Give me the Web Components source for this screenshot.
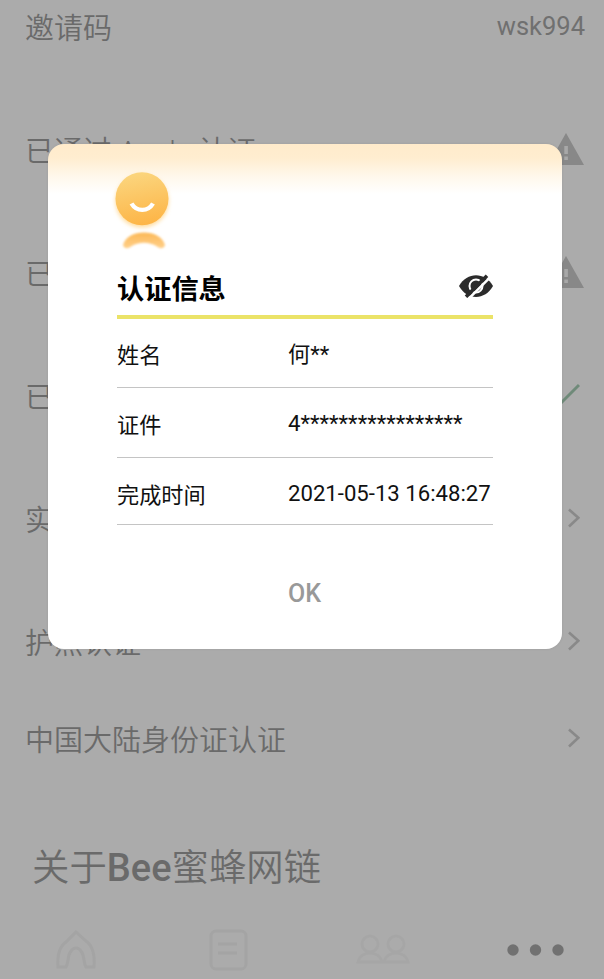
<!DOCTYPE html>
<html lang="zh-CN">
<head>
<meta charset="utf-8">
<meta name="viewport" content="width=device-width, initial-scale=1">
<title>认证信息</title>
<style>
html, body {
  margin: 0;
  height: 979px;
  overflow: hidden;
}
body {
  background: #ababab;
  font-family: Roboto, "Noto Sans CJK SC", sans-serif;
}
</style>
</head>
<body>
<bee-app></bee-app>

<script>
const define = (name, html) => {
    const template = document.createElement("template");
    template.innerHTML = html;
    customElements.define(name, class extends HTMLElement {
        constructor() {
            super();
            this.attachShadow({ mode: "open" });
            this.shadowRoot.appendChild(template.content.cloneNode(true));
        }
    });
};

define("setting-row", `\
<style>
:host {
  display: flex;
  align-items: center;
  justify-content: space-between;
  box-sizing: border-box;
  height: 123px;
  padding: 4px 19px 0 25px;
  color: #6a6a6a;
  font-size: 29px;
  font-weight: 350;
  line-height: 42px;
  white-space: nowrap;
}
</style>
<slot></slot>
<slot name="end"></slot>
`);

// 右側のアイコン
define("warn-icon", `\
<style>
:host { display: block; width: 36px; height: 32px; }
svg { display: block; }
</style>
<svg width="36" height="32" viewBox="0 0 36 32">
  <path d="M18 0 36 32H0Z" fill="#888"/>
  <path d="M16.3 13h3.6v8h-3.6zM16.3 23.5h3.6V27h-3.6z" fill="#a8a8a8"/>
</svg>
`);

define("check-icon", `\
<style>
:host { display: block; width: 32px; height: 26px; }
svg { display: block; }
</style>
<svg width="32" height="26" viewBox="0 0 32 26">
  <path d="m1 14 9 9L31 2" fill="none" stroke="#6f8a79" stroke-width="3"/>
</svg>
`);

define("chevron-icon", `\
<style>
:host { display: block; width: 12px; height: 20px; }
svg { display: block; }
</style>
<svg width="12" height="20" viewBox="0 0 12 20">
  <path d="m1 1.5 9.3 8.3L1 18.5" fill="none" stroke="#898989" stroke-width="2.6"/>
</svg>
`);

define("tab-bar", `\
<style>
:host {
  display: grid;
  grid-template-columns: repeat(4, 153.5px);
  justify-items: center;
  align-items: center;
  height: 58px;
  margin-left: -1px;
}
svg { display: block; fill: none; stroke: #a4a4a4; stroke-width: 3; }
.more { fill: #717171; stroke: none; }
</style>
<svg width="44" height="44" viewBox="0 0 44 44">
  <path d="M4 39c-1-12 1-20 8-25L22 4l10 9c7 5 9 14 8 26h-8c-3-5-1-11-5-16-3-4-7-4-10 0-4 5-2 11-5 16Z"/>
</svg>
<svg width="44" height="44" viewBox="0 0 44 44">
  <rect x="4" y="3" width="35" height="38" rx="5"/>
  <path d="M11 16h19M11 25h19"/>
</svg>
<svg width="56" height="44" viewBox="0 0 56 44" opacity=".6">
  <circle cx="15" cy="16" r="8"/>
  <circle cx="41" cy="16" r="8"/>
  <path d="M3 34c3-12 21-12 24 0ZM29 34c3-12 21-12 24 0Z"/>
</svg>
<svg class="more" width="58" height="12" viewBox="0 0 58 12">
  <circle cx="6" cy="6" r="5.7"/>
  <circle cx="28.5" cy="6" r="5.7"/>
  <circle cx="51" cy="6" r="5.7"/>
</svg>
`);

define("info-row", `\
<style>
:host {
  display: grid;
  grid-template-columns: 171px 1fr;
  align-items: center;
  box-sizing: border-box;
  height: 70px;
  padding-top: 4px;
  border-bottom: 1px solid #c4c4c4;
  font-size: 22.15px;
  line-height: 32px;
  white-space: nowrap;
}
slot { display: block; }
.value { margin-top: -3px; }
</style>
<slot name="label"></slot>
<slot class="value"></slot>
`);

define("bee-face", `\
<style>
:host { display: block; width: 72px; height: 96px; }
svg { display: block; }
</style>
<svg width="72" height="96" viewBox="0 0 72 96">
  <defs>
    <linearGradient id="face" x1=".3" y1="0" x2=".5" y2="1">
      <stop offset="0" stop-color="#fbd67f"/>
      <stop offset="1" stop-color="#fdb547"/>
    </linearGradient>
    <linearGradient id="body" x1="0" y1="0" x2="0" y2="1">
      <stop offset="0" stop-color="#fcb957"/>
      <stop offset="1" stop-color="#ffd08a"/>
    </linearGradient>
    <filter id="glow" x="-20%" y="-20%" width="140%" height="140%"><feGaussianBlur stdDeviation="2"/></filter>
    <filter id="soft" x="-20%" y="-40%" width="140%" height="180%"><feGaussianBlur stdDeviation=".9"/></filter>
  </defs>
  <circle cx="35" cy="37" r="26.5" fill="#ffdc9c" filter="url(#glow)"/>
  <circle cx="35" cy="34.7" r="26.5" fill="url(#face)"/>
  <path d="M24.500 39.500c5 8.500 16.500 8.500 21.500 0" fill="none" stroke="#fff" stroke-width="4.400"/>
  <path d="M16 81c2-8 11-12.500 21-12.500S56 73 58 81c-1 4-5 4-8 1.500-8-5-18-5-26 0-3 2.500-7 2.500-8-1.500Z" fill="url(#body)" filter="url(#soft)"/>
</svg>
`);

define("eye-off", `\
<style>
:host { display: block; width: 34px; height: 24px; }
svg { display: block; }
</style>
<svg width="34" height="24" viewBox="0 0 34 24">
  <path d="M0 12C8-2.500 26-2.500 34 12 26 26.500 8 26.500 0 12Z" fill="#2b2b2b"/>
  <circle cx="17" cy="12" r="6.500" fill="#2b2b2b" stroke="#fff" stroke-width="2"/>
  <path d="M10.200 24.200 31 3.400" stroke="#fff" stroke-width="2.600"/>
  <path d="M7 22.800 28 1.800" stroke="#2b2b2b" stroke-width="3.600"/>
</svg>
`);

define("auth-dialog", `\
<style>
:host {
  position: absolute;
  left: 48px;
  top: 144px;
  display: flex;
  flex-direction: column;
  box-sizing: border-box;
  width: 514px;
  height: 505px;
  padding: 20px 69px 0;
  border-radius: 16px;
  background: linear-gradient(#ffebcb, #ffedd0 14px, #fff8ec 33px, #fff 50px);
  box-shadow: 0 0 3px rgba(0, 0, 0, .08);
  color: #111;
}
bee-face { margin-left: -10px; }
header {
  display: flex;
  align-items: center;
  justify-content: space-between;
  box-sizing: border-box;
  height: 59px;
  border-bottom: 4px solid #ebe368;
}
h2 {
  margin: 4px 0 0;
  color: #000;
  font-size: 27.2px;
  font-weight: 700;
  line-height: 40px;
}
eye-off { margin-bottom: 3px; }
::slotted(info-row:first-of-type) { height: 69px; }
::slotted(info-row:last-of-type) { height: 67px; padding-top: 7px; }
button {
  align-self: flex-start;
  margin: 53px 0 0 171px;
  padding: 0;
  border: 0;
  background: none;
  color: #999;
  font: 500 25px/32px Roboto, sans-serif;
}
</style>
<bee-face></bee-face>
<header>
  <h2><slot name="title"></slot></h2>
  <eye-off></eye-off>
</header>
<slot></slot>
<button>OK</button>
`);

define("bee-app", `\
<style>
:host {
  position: relative;
  display: flex;
  flex-direction: column;
  width: 604px;
  height: 979px;
  overflow: hidden;
}
.invite { height: 54px; margin-bottom: 34px; }
.code { margin-top: -7px; color: #707070; font-size: 25.5px; font-weight: 400; }
.last { height: 71px; }
chevron-icon { margin: -5px 5px 0 0; }
warn-icon { margin: -6px 1px 0 0; }
check-icon { margin: -4px 5px 0 0; }
h1 {
  flex: 1;
  margin: 0;
  padding: 67px 0 0 32px;
  color: #6a6a6a;
  font-size: 37.4px;
  font-weight: 350;
  line-height: 54px;
}
b { font-family: Roboto, sans-serif; font-size: 38px; font-weight: 500; }
</style>
<setting-row class="invite">邀请码<span class="code" slot="end">wsk994</span></setting-row>
<setting-row>已通过 Apple 认证<warn-icon slot="end"></warn-icon></setting-row>
<setting-row>已通过<warn-icon slot="end"></warn-icon></setting-row>
<setting-row>已通过<check-icon slot="end"></check-icon></setting-row>
<setting-row>实名认证<chevron-icon slot="end"></chevron-icon></setting-row>
<setting-row>护照认证<chevron-icon slot="end"></chevron-icon></setting-row>
<setting-row class="last">中国大陆身份证认证<chevron-icon slot="end"></chevron-icon></setting-row>
<h1>关于<b>Bee</b>蜜蜂网链</h1>
<tab-bar></tab-bar>
<auth-dialog>
  <span slot="title">认证信息</span>
  <info-row><span slot="label">姓名</span>何**</info-row>
  <info-row><span slot="label">证件</span>4*****************</info-row>
  <info-row><span slot="label">完成时间</span>2021-05-13 16:48:27</info-row>
</auth-dialog>
`);
</script>
</body>
</html>
